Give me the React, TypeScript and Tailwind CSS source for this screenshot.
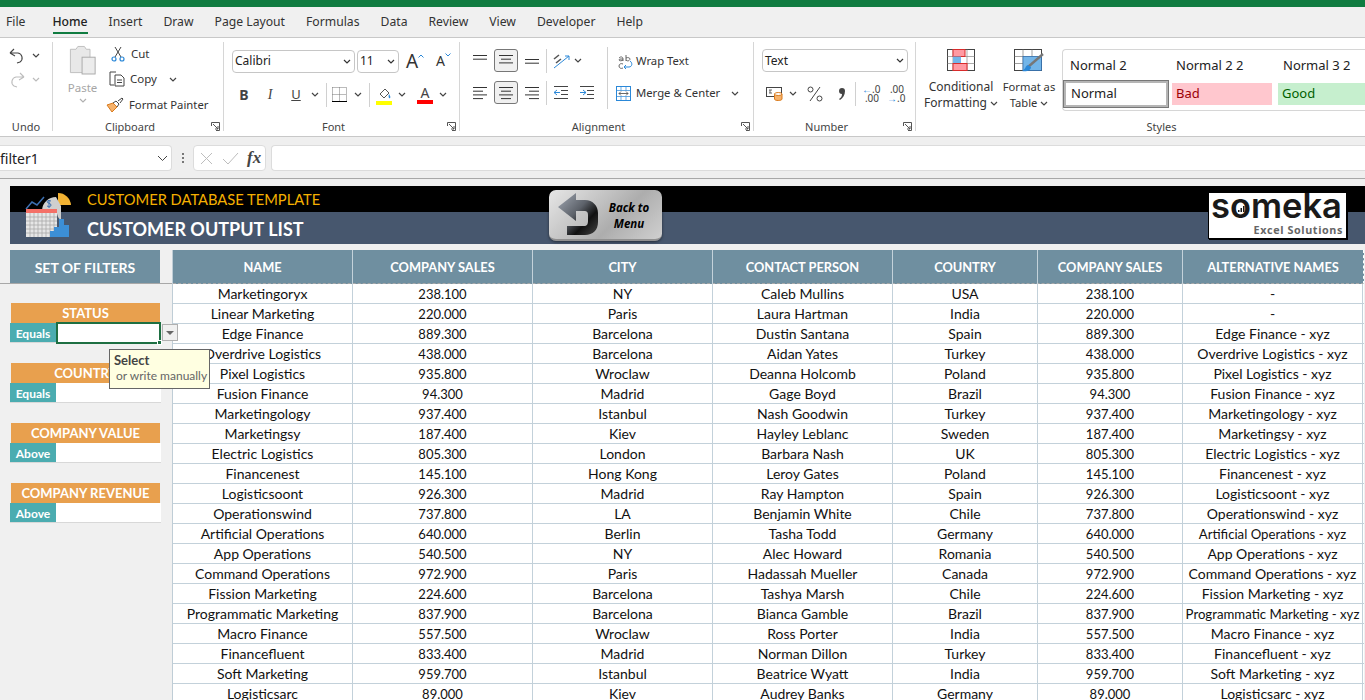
import React from 'react';

const tabs = ['File', 'Home', 'Insert', 'Draw', 'Page Layout', 'Formulas', 'Data', 'Review', 'View', 'Developer', 'Help'];

const rows = [
  ['Marketingoryx', '238.100', 'NY', 'Caleb Mullins', 'USA', '-'],
  ['Linear Marketing', '220.000', 'Paris', 'Laura Hartman', 'India', '-'],
  ['Edge Finance', '889.300', 'Barcelona', 'Dustin Santana', 'Spain'],
  ['Overdrive Logistics', '438.000', 'Barcelona', 'Aidan Yates', 'Turkey'],
  ['Pixel Logistics', '935.800', 'Wroclaw', 'Deanna Holcomb', 'Poland'],
  ['Fusion Finance', '94.300', 'Madrid', 'Gage Boyd', 'Brazil'],
  ['Marketingology', '937.400', 'Istanbul', 'Nash Goodwin', 'Turkey'],
  ['Marketingsy', '187.400', 'Kiev', 'Hayley Leblanc', 'Sweden'],
  ['Electric Logistics', '805.300', 'London', 'Barbara Nash', 'UK'],
  ['Financenest', '145.100', 'Hong Kong', 'Leroy Gates', 'Poland'],
  ['Logisticsoont', '926.300', 'Madrid', 'Ray Hampton', 'Spain'],
  ['Operationswind', '737.800', 'LA', 'Benjamin White', 'Chile'],
  ['Artificial Operations', '640.000', 'Berlin', 'Tasha Todd', 'Germany'],
  ['App Operations', '540.500', 'NY', 'Alec Howard', 'Romania'],
  ['Command Operations', '972.900', 'Paris', 'Hadassah Mueller', 'Canada'],
  ['Fission Marketing', '224.600', 'Barcelona', 'Tashya Marsh', 'Chile'],
  ['Programmatic Marketing', '837.900', 'Barcelona', 'Bianca Gamble', 'Brazil'],
  ['Macro Finance', '557.500', 'Wroclaw', 'Ross Porter', 'India'],
  ['Financefluent', '833.400', 'Madrid', 'Norman Dillon', 'Turkey'],
  ['Soft Marketing', '959.700', 'Istanbul', 'Beatrice Wyatt', 'India'],
  ['Logisticsarc', '89.000', 'Kiev', 'Audrey Banks', 'Germany'],
];

const headers = ['NAME', 'COMPANY SALES', 'CITY', 'CONTACT PERSON', 'COUNTRY', 'COMPANY SALES', 'ALTERNATIVE NAMES'];
const cols = 'grid grid-cols-[180px_180px_180px_180px_145px_145px_180px]';

function Chev({ className = '', color = '#444' }: { className?: string; color?: string }) {
  return (
    <svg width="8" height="5" viewBox="0 0 8 5" className={className}>
      <path d="M1 1l3 3 3-3" fill="none" stroke={color} strokeWidth="1.2" />
    </svg>
  );
}

function Launcher() {
  return (
    <svg width="9" height="9" viewBox="0 0 9 9" className="absolute right-[3px] bottom-0">
      <path d="M.5 4V.5H8.500V8.500H5M2 2l5 5M7 4v3H4" fill="none" stroke="#555" strokeWidth="1" />
    </svg>
  );
}

function Lines({ w = [14, 10, 14, 10], align = 'left' }: { w?: number[]; align?: string }) {
  return (
    <svg width="16" height="14" viewBox="0 0 16 14">
      {w.map((l, i) => {
        const x = align === 'left' ? 1 : align === 'right' ? 15 - l : 8 - l / 2;
        return <path key={i} d={`M${x} ${1.5 + i * 3.7}h${l}`} stroke="#333" strokeWidth="1" />;
      })}
    </svg>
  );
}

function Sep({ h = 'h-[24px]' }: { h?: string }) {
  return <div className={`w-px ${h} bg-[#d0d0d0]`} />;
}

function Group({ w, label, launcher, labelClass = '', children }: { w: number; label: string; launcher?: boolean; labelClass?: string; children: React.ReactNode }) {
  return (
    <div style={{ width: w }} className="relative flex flex-col shrink-0 border-r border-[#d6d6d6] mb-[5px] mt-[4px] last:border-r-0">
      <div className="flex-1 min-h-0">{children}</div>
      <div className={`h-[16px] text-center text-[11px] leading-[23px] text-[#444] ${launcher ? 'pr-[16px]' : ''} ${labelClass}`}>{label}</div>
      {launcher && <Launcher />}
    </div>
  );
}

function Combo({ text, w }: { text: string; w: number }) {
  return (
    <div style={{ width: w }} className="h-[23px] bg-white border border-[#c6c6c6] rounded-[4px] flex items-center justify-between pl-[2px] pr-[3px] text-[12px] text-[#222]">
      <span>{text}</span>
      <Chev color="#333" />
    </div>
  );
}

function RibbonIconBtn({ w, active, children }: { w: number; active?: boolean; children: React.ReactNode }) {
  return (
    <div style={{ width: w }} className={`h-[23px] flex items-center justify-center rounded-[3px] ${active ? 'bg-[#f0f0f0] border border-[#777]' : ''}`}>
      {children}
    </div>
  );
}

function Ribbon() {
  return (
    <div className="h-[99px] bg-white border-b border-[#c8c8c8] flex overflow-hidden">
      <Group w={53} label="Undo">
        <div className="pt-[1px] pl-[9px] flex items-center gap-[7px] h-[25px]">
          <svg width="16" height="17" viewBox="0 0 16 17">
            <path d="M1 6l4-4M1 6l5 3M1 6h8a5 5 0 0 1 2 9l-3 1" fill="none" stroke="#444" strokeWidth="1.1" />
          </svg>
          <Chev />
        </div>
        <div className="pl-[9px] flex items-center gap-[7px] h-[25px]">
          <svg width="16" height="17" viewBox="0 0 16 17">
            <path d="M15 6l-4-4M15 6l-5 3M15 6H7a5 5 0 0 0-2 9l3 1" fill="none" stroke="#bdbdbd" strokeWidth="1.1" />
          </svg>
          <Chev color="#bbb" />
        </div>
      </Group>

      <Group w={171} label="Clipboard" launcher>
        <div className="flex">
          <div className="w-[56px] flex flex-col items-center pl-[3px] pt-[3px]">
            <svg width="28" height="30" viewBox="0 0 30 32">
              <path d="M1.500 4.500h6l2-3h7l2 3h4v25h-21z" fill="#e8e8e8" stroke="#bcbcbc" />
              <rect x="14" y="13" width="14" height="18" fill="#ececec" stroke="#a8a8a8" />
            </svg>
            <span className="text-[11.5px] leading-[16px] mt-[5px] text-[#a6a6a6]">Paste</span>
            <Chev color="#b0b0b0" className="mt-[2px]" />
          </div>
          <div className="flex flex-col text-[11.5px] text-[#333] -mt-[1px]">
            <div className="h-[25px] flex items-center gap-[6px]">
              <svg width="14" height="16" viewBox="0 0 14 16" className="ml-[2px]">
                <path d="M4 1l6 10M10 1L4 11" fill="none" stroke="#444" strokeWidth="1" />
                <circle cx="3" cy="13" r="2" fill="none" stroke="#2b88d8" strokeWidth="1.200" />
                <circle cx="11" cy="13" r="2" fill="none" stroke="#2b88d8" strokeWidth="1.200" />
              </svg>
              <span>Cut</span>
            </div>
            <div className="h-[26px] flex items-center gap-[5px]">
              <svg width="16" height="16" viewBox="0 0 16 16">
                <path d="M5 14H1V1h6M6 4h6l3 3v8H6zM8 9h5M8 11.500h5" fill="none" stroke="#444" strokeWidth="1" />
              </svg>
              <span>Copy</span>
              <Chev className="ml-[7px]" />
            </div>
            <div className="h-[26px] flex items-center gap-[5px] -ml-[3px]">
              <svg width="18" height="16" viewBox="0 0 18 16">
                <path d="M1 8l5 7 5-5-4-4z" fill="#f6b26b" stroke="#d97a1c" />
                <path d="M7 6l3-2 3 3-2 3M12 4l4-3 1 1-3 4" fill="none" stroke="#444" />
              </svg>
              <span className="text-[11.3px]">Format Painter</span>
            </div>
          </div>
        </div>
      </Group>

      <Group w={236} label="Font" launcher>
        <div className="pl-[8px] pt-[7px]">
          <div className="flex items-center gap-[2px]">
            <Combo text="Calibri" w={123} />
            <Combo text="11" w={42} />
            <div className="flex items-start ml-[5px] text-[#333] w-[28px]">
              <span className="text-[19px] leading-[22px]">A</span>
              <svg width="6" height="4" viewBox="0 0 6 4" className="mt-[4px]"><path d="M.5 3.500L3 1l2.500 2.500" fill="none" stroke="#2b88d8" /></svg>
            </div>
            <div className="flex items-start text-[#333]">
              <span className="text-[14px] leading-[24px]">A</span>
              <svg width="6" height="4" viewBox="0 0 6 4" className="mt-[4px]"><path d="M.5.5L3 3 5.500.5" fill="none" stroke="#2b88d8" /></svg>
            </div>
          </div>
          <div className="flex items-center mt-[10px] h-[23px] text-[#444]">
            <span className="w-[26px] -ml-[1px] text-center font-bold text-[14px]">B</span>
            <span className="w-[26px] text-center italic text-[14px] font-['Liberation_Serif',serif]">I</span>
            <span className="w-[26px] text-center underline text-[13px]">U</span>
            <Chev className="ml-[2px]" />
            <div className="ml-[7px]"><Sep /></div>
            <svg width="15" height="15" viewBox="0 0 15 15" className="ml-[5px]">
              <path d="M.5.500h14M.5 7.500h14M.5.500v14M7.500.500v14M14.500.500v14" stroke="#777" strokeDasharray="1 1" fill="none" />
              <path d="M0 14.500h15" stroke="#000" />
            </svg>
            <Chev className="ml-[7px]" />
            <div className="ml-[7px]"><Sep /></div>
            <svg width="16" height="20" viewBox="0 0 16 20" className="ml-[6px]">
              <path d="M4 9l5-5 4 4-5 5z" fill="#fff" stroke="#555" />
              <path d="M13 9c1 2 2 3 1 4s-2-1-1-4" fill="#2b88d8" />
              <rect y="16" width="16" height="4" fill="#ffff00" />
            </svg>
            <Chev className="ml-[6px]" />
            <div className="ml-[11px] w-[16px] flex flex-col items-center">
              <span className="text-[14px] leading-[14px]">A</span>
              <div className="w-[16px] h-[4px] bg-[#ff0000]" />
            </div>
            <Chev className="ml-[6px]" />
          </div>
        </div>
      </Group>

      <Group w={294} label="Alignment" launcher>
        <div className="pl-[12px] pt-[7px] flex">
          <div className="flex flex-col">
            <div className="flex items-center h-[23px]">
              <RibbonIconBtn w={16}><Lines w={[14, 14]} /></RibbonIconBtn>
              <div className="mx-[6px]"><RibbonIconBtn w={24} active><Lines w={[14, 10, 14]} align="center" /></RibbonIconBtn></div>
              <RibbonIconBtn w={16}><div className="mt-[8px]"><Lines w={[14, 14]} /></div></RibbonIconBtn>
              <div className="ml-[6px]"><Sep /></div>
              <svg width="18" height="16" viewBox="0 0 18 16" className="ml-[6px]">
                <path d="M1 15L16 3M16 3h-4M16 3v4" fill="none" stroke="#2b88d8" />
                <path d="M1 6l5-4M3 10l5-4" fill="none" stroke="#555" strokeWidth="1.600" />
              </svg>
              <Chev className="ml-[3px]" />
            </div>
            <div className="flex items-center h-[23px] mt-[9px]">
              <RibbonIconBtn w={16}><Lines /></RibbonIconBtn>
              <div className="mx-[6px]"><RibbonIconBtn w={24} active><Lines w={[14, 10, 14, 10]} align="center" /></RibbonIconBtn></div>
              <RibbonIconBtn w={16}><Lines align="right" /></RibbonIconBtn>
              <div className="ml-[6px]"><Sep /></div>
              <svg width="16" height="13" viewBox="0 0 16 13" className="ml-[6px]">
                <path d="M1 .5h14M8 4.500h7M8 8.500h7M1 12.500h14" stroke="#444" />
                <path d="M7 6.500H1M1 6.500l3-2.500M1 6.500l3 2.500" fill="none" stroke="#2b88d8" />
              </svg>
              <svg width="16" height="13" viewBox="0 0 16 13" className="ml-[10px]">
                <path d="M1 .5h14M8 4.500h7M8 8.500h7M1 12.500h14" stroke="#444" />
                <path d="M1 6.500h6M7 6.500L4 4M7 6.500L4 9" fill="none" stroke="#2b88d8" />
              </svg>
            </div>
          </div>
          <div className="ml-[12px] -mt-[2px]"><Sep h="h-[62px]" /></div>
          <div className="ml-[10px] pt-[1px] flex flex-col text-[11.3px] text-[#333]">
            <div className="h-[23px] flex items-center gap-[3px]">
              <svg width="15" height="16" viewBox="0 0 15 16" className="overflow-visible">
                <path d="M1 4c2-2 4-1 4 1v2M5 5c-3 0-4 0-4 1s3 1 4 0M8 1v6M8 4c2-1 4 0 4 1s-2 3-4 1M5 10c-2-1-4 0-4 2s2 3 4 2" fill="none" stroke="#555" strokeWidth=".9" />
                <path d="M12 7c3 2 2 6-1 6H6M6 13l2-2M6 13l2 2" fill="none" stroke="#2b88d8" />
              </svg>
              <span>Wrap Text</span>
            </div>
            <div className="h-[23px] mt-[9px] flex items-center -ml-[2px] gap-[5px]">
              <svg width="15" height="15" viewBox="0 0 15 15">
                <rect x=".5" y=".5" width="14" height="14" fill="#fff" stroke="#2b88d8" />
                <path d="M.5 4.500h14M.5 10.500h14M5 .5v4M10 .5v4M5 10.500v4M10 10.500v4" stroke="#2b88d8" strokeWidth=".7" />
                <path d="M3 7.500h9M3 7.500l2-2M3 7.500l2 2M12 7.500l-2-2M12 7.500l-2 2" fill="none" stroke="#444" strokeWidth=".8" />
              </svg>
              <span>Merge &amp; Center</span>
              <Chev className="ml-[6px]" />
            </div>
          </div>
        </div>
      </Group>

      <Group w={162} label="Number" launcher>
        <div className="pl-[8px] pt-[7px]">
          <Combo text="Text" w={146} />
          <div className="flex items-center h-[23px] mt-[10px] text-[#444]">
            <svg width="17" height="15" viewBox="0 0 17 15" className="ml-[4px]">
              <rect x=".5" y="1.500" width="15" height="9" fill="#fff" stroke="#444" />
              <path d="M3 4h3M3 7h3M4 4v3" fill="none" stroke="#666" />
              <path d="M8.500 8v5c0 2 7.500 2 7.500 0V8z" fill="#f6b26b" stroke="#d97a1c" />
              <ellipse cx="12.250" cy="8" rx="3.750" ry="1.500" fill="#fff" stroke="#d97a1c" />
            </svg>
            <Chev className="ml-[6px]" />
            <svg width="16" height="16" viewBox="0 0 16 16" className="ml-[10px]">
              <circle cx="3.500" cy="3.500" r="2.500" fill="none" stroke="#444" />
              <circle cx="12.500" cy="12.500" r="2.500" fill="none" stroke="#444" />
              <path d="M13 1L3 15" stroke="#444" />
            </svg>
            <svg width="8" height="12" viewBox="0 0 8 12" className="ml-[15px]">
              <path d="M4 0a3 3 0 0 1 3 3c0 4-2 7-5 9l-1-1c2-1 3-3 3-5a3 3 0 0 1 0-6z" fill="#444" />
            </svg>
            <div className="ml-[9px]"><Sep /></div>
            <div className="ml-[6px] w-[17px] text-[10px] leading-[11px] text-right whitespace-nowrap">
              <div><span className="text-[#2b88d8]">←</span>.0</div>
              <div className="-mt-[2px]">.00</div>
            </div>
            <div className="w-[17px] ml-[8px] text-[10px] leading-[11px] text-right whitespace-nowrap">
              <div>.00</div>
              <div className="-mt-[2px]"><span className="text-[#2b88d8]">→</span>.0</div>
            </div>
          </div>
        </div>
      </Group>

      <Group w={449} label="Styles" labelClass="pl-[42px]">
        <div className="flex pt-[7px]">
          <div className="w-[85px] pl-[5px] flex flex-col items-center text-[12px] leading-[16px] text-[#333]">
            <svg width="28" height="22" viewBox="0 0 28 22">
              <rect x=".5" y=".5" width="27" height="21" fill="#fff" stroke="#444" />
              <path d="M.5 7.500h27M.5 14.500h27M6 .5v21M13 .5v21M20 .5v21" stroke="#888" strokeWidth=".7" />
              <rect x="6" y=".5" width="12" height="7" fill="#ff9aa2" stroke="#d92b2b" />
              <rect x="6" y="7.500" width="8" height="7" fill="#73b5e8" />
              <rect x="6" y="14.500" width="14" height="7" fill="#ff9aa2" stroke="#d92b2b" />
            </svg>
            <span className="mt-[8px] whitespace-nowrap">Conditional</span>
            <span className="whitespace-nowrap flex items-center gap-[3px]">Formatting <Chev /></span>
          </div>
          <div className="w-[56px] flex flex-col items-center text-[11.2px] leading-[16px] text-[#333]">
            <svg width="30" height="23" viewBox="0 0 30 23">
              <rect x=".5" y=".5" width="27" height="21" fill="#fff" stroke="#444" />
              <path d="M.5 7.500h27M.5 14.500h27M9 .5v21M18 .5v21" stroke="#777" strokeWidth=".7" />
              <rect x="9" y="7.500" width="18.500" height="14" fill="#73b5e8" stroke="#2b6cb0" strokeWidth=".7" />
              <path d="M29 5L14 18" stroke="#777" strokeWidth="2.400" />
              <path d="M14 16c-3 1-2 4-6 6 5 1 9-1 9-4z" fill="#2b88d8" />
            </svg>
            <span className="mt-[7px] whitespace-nowrap">Format as</span>
            <span className="whitespace-nowrap flex items-center gap-[3px]">Table <Chev /></span>
          </div>
          <div className="ml-[5px] w-[303px] h-[62px] border border-r-0 border-[#d6d6d6] rounded-l-[4px] text-[13px] text-[#222] overflow-hidden">
            <div className="flex h-[30px] items-center pt-[2px]">
              <span className="w-[106px] pl-[7px]">Normal 2</span>
              <span className="w-[107px] pl-[7px]">Normal 2 2</span>
              <span className="pl-[7px]">Normal 3 2</span>
            </div>
            <div className="flex items-center">
              <div className="w-[106px] h-[28px] bg-white border-[3px] border-[#b5b5b5] outline outline-[#777] -outline-offset-1 flex items-center pl-[5px]">Normal</div>
              <div className="ml-[3px] w-[100px] h-[22px] bg-[#ffc7ce] text-[#9c0006] flex items-center pl-[4px]">Bad</div>
              <div className="ml-[6px] flex-1 h-[22px] bg-[#c6efce] text-[#006100] flex items-center pl-[4px]">Good</div>
            </div>
          </div>
        </div>
      </Group>
    </div>
  );
}

function FormulaBar() {
  return (
    <div className="h-[42px] bg-[#efefef] border-b border-[#a8a8a8] pt-[8px] flex items-start">
      <div className="w-[172px] h-[26px] bg-white border border-l-0 border-[#dcdcdc] rounded-r-[4px] flex items-center justify-between pr-[3px] text-[14px] text-[#222]">
        <span className="pt-[1px]">filter1</span>
        <svg width="11" height="7" viewBox="0 0 11 7"><path d="M1 1l4.500 4.500L10 1" fill="none" stroke="#444" /></svg>
      </div>
      <div className="w-[21px] h-[26px] flex flex-col items-center justify-center gap-[2px]">
        <div className="w-[2px] h-[2px] bg-[#777]" />
        <div className="w-[2px] h-[2px] bg-[#777]" />
        <div className="w-[2px] h-[2px] bg-[#777]" />
      </div>
      <div className="w-[73px] h-[26px] bg-white border border-[#dcdcdc] rounded-[4px] flex items-center pl-[6px]">
        <svg width="13" height="13" viewBox="0 0 13 13"><path d="M1 1l11 11M12 1L1 12" stroke="#bdbdbd" /></svg>
        <svg width="17" height="13" viewBox="0 0 17 13" className="ml-[9px]"><path d="M1 7l5 5L16 1" fill="none" stroke="#bdbdbd" /></svg>
        <span className="ml-[8px] italic font-bold text-[17px] text-[#444] font-['Liberation_Serif',serif]">fx</span>
      </div>
      <div className="ml-[5px] flex-1 h-[26px] bg-white border border-r-0 border-[#dcdcdc] rounded-l-[4px]" />
    </div>
  );
}

function BackButton() {
  return (
    <div className="w-[113px] h-[51px] rounded-[7px] bg-[linear-gradient(135deg,#e6e6e6,#bcbcbc_45%,#adadad_60%,#d0d0d0)] border-b-2 border-[#8f8f8f] shadow-[0_1px_3px_rgba(0,0,0,.5)] flex items-center">
      <svg width="42" height="44" viewBox="0 0 42 44" className="ml-[8px] shrink-0">
        <defs>
          <linearGradient id="bk" x1="0" y1="0" x2="1" y2="1">
            <stop offset="0" stopColor="#a3aab5" />
            <stop offset=".45" stopColor="#5d626a" />
            <stop offset=".7" stopColor="#111" />
            <stop offset="1" stopColor="#444" />
          </linearGradient>
        </defs>
        <path d="M1 15L19 1v7h9c8 0 13 6 13 13v9c0 8-5 13-13 13H10v-9h17c3 0 4-2 4-5v-6c0-3-1-4-4-4h-8v10z" fill="url(#bk)" />
      </svg>
      <div className="flex-1 pr-[3px] pt-[3px] text-center italic font-bold text-[11.5px] leading-[16px] text-black font-['Open_Sans',sans-serif] whitespace-nowrap">
        Back to<br />Menu
      </div>
    </div>
  );
}

function SomekaLogo() {
  return (
    <div className="w-[139px] h-[47px] bg-white border border-black shadow-[1px_1px_0_#000] flex flex-col font-['Inter',sans-serif]">
      <div className="text-[34.500px] leading-[26px] pl-[2px] font-semibold text-[#1a1a1a] whitespace-nowrap">
        s<span className="relative">o<svg width="8" height="8" viewBox="0 0 8 8" className="absolute left-[7px] top-[20px]"><path d="M1 7V5h1.500v2zM3.500 7V3H5v4zM6 7V1h1.500v6z" fill="#1a1a1a" /></svg></span>meka
      </div>
      <div className="text-right pr-[3px] mt-[4px] text-[10.800px] leading-[14px] font-bold text-[#666] tracking-[.6px] font-['Open_Sans',sans-serif] whitespace-nowrap">Excel Solutions</div>
    </div>
  );
}

function Banner() {
  return (
    <div className="ml-[10px] h-[58px] flex items-center bg-[linear-gradient(#000_0_26px,#47576e_26px)] font-['Lato',sans-serif]">
      <svg width="48" height="48" viewBox="0 0 48 48" className="ml-[15px] shrink-0">
        <path d="M1 18l6-7 5 3 7-8" fill="none" stroke="#3c6fb0" strokeWidth="1.500" />
        <path d="M33 2a13 13 0 0 1 13 12H33z" fill="#f2b233" />
        <path d="M31 6a14 14 0 0 0-14 13h14l2 7 3 4V15z" fill="#cfcfcf" />
        <path d="M24 9v8M26 10c-3-1-4 0-4 1s4 1 4 3-2 2-4 1" fill="none" stroke="#3c6fb0" />
        <rect x="1" y="18" width="31" height="4" fill="#f47067" />
        <rect x="1" y="22" width="31" height="24" fill="#e6e6e6" />
        <path d="M1 26h31M1 30h31M1 34h31M1 38h31M1 42h31M5 22v24M9 22v24M13 22v24M17 22v24M21 22v24M25 22v24M29 22v24" stroke="#aaa" strokeWidth=".8" />
        <path d="M25 46v-6h4v-4h5v-8h5v6h5v12z" fill="#3c8fd6" />
      </svg>
      <div className="ml-[14px] w-[462px] shrink-0">
        <div className="h-[26px] leading-[27px] text-[14.700px] text-[#f5b000]">CUSTOMER DATABASE TEMPLATE</div>
        <div className="h-[32px] leading-[34px] text-[18px] font-bold text-white">CUSTOMER OUTPUT LIST</div>
      </div>
      <BackButton />
      <div className="ml-auto mr-[18px]"><SomekaLogo /></div>
    </div>
  );
}

function Filter({ title, op, selected }: { title: string; op: string; selected?: boolean }) {
  return (
    <div className="ml-[10px] w-[151px] mb-[20px]">
      <div className="ml-px w-[149px] h-[20px] bg-[#e8a04e] text-white font-bold text-[13px] leading-[20px] text-center whitespace-nowrap">{title}</div>
      <div className="h-[20px] flex border-b border-[#d8d8d8] relative">
        <div className="w-[46px] bg-[#4bacb0] text-white font-bold text-[12px] leading-[21px] text-center">{op}</div>
        <div className="flex-1 bg-white" />
        {selected && (
          <>
            <div className="absolute left-[46px] -top-[1px] w-[105px] h-[22px] border-2 border-[#1e6f42]">
              <div className="absolute -right-[3px] -bottom-[3px] w-[5px] h-[5px] bg-[#1e6f42] border border-white" />
            </div>
            <div className="absolute left-[152px] top-[1px] w-[16px] h-[17px] bg-[#f0f0f0] border border-[#b0b0b0] flex items-center justify-center">
              <div className="w-0 h-0 border-x-[4px] border-x-transparent border-t-[4px] border-t-[#666]" />
            </div>
          </>
        )}
      </div>
    </div>
  );
}

function Sheet() {
  return (
    <div className="flex-1 bg-[#f0f0f0] pt-[7px] overflow-hidden font-['Lato',sans-serif]">
      <Banner />
      <div className="flex mt-[6px]">
        <div className="w-[172px] shrink-0 relative">
          <div className="h-[34px] border-b border-[#a8a8a8] mb-[19px]">
            <div className="ml-[10px] w-[150px] h-[33px] bg-[#6f8fa0] text-white font-bold text-[14px] leading-[35px] text-center">SET OF FILTERS</div>
          </div>
          <Filter title="STATUS" op="Equals" selected />
          <Filter title="COUNTRY" op="Equals" />
          <Filter title="COMPANY VALUE" op="Above" />
          <Filter title="COMPANY REVENUE" op="Above" />
          <div className="absolute left-[109px] top-[99px] z-10 w-[101px] h-[40px] bg-[#ffffe1] border border-[#666] pl-[4px] pt-[3px] text-[#666] text-[12px] leading-[14px] whitespace-nowrap">
            <div className="font-bold text-[13px] leading-[15px] text-[#444]">Select</div>
            <div className="pl-[2px] pt-[1px]">or write manually</div>
          </div>
        </div>
        <div className="border-l border-[#bfcdd6]">
          <div className={`${cols} h-[34px] bg-[#6f8fa0] border-b border-[#a8a8a8] border-r border-dashed border-r-[#fff]`}>
            {headers.map((h, i) => (
              <div key={i} className="border-r border-[#c4d2da] last:border-r-0 text-white font-bold text-[12.800px] leading-[35px] text-center whitespace-nowrap">{h}</div>
            ))}
          </div>
          {rows.map(r => {
            const alt = r[5] ?? `${r[0]} - xyz`;
            const cells = [r[0], r[1], r[2], r[3], r[4], r[1], alt];
            return (
              <div key={r[0]} className={`${cols} h-[20px] bg-white border-b border-[#c3d1da]`}>
                {cells.map((c, i) => (
                  <div
                    key={i}
                    className={`border-r border-[#c3d1da] leading-[20px] text-[#111] text-center whitespace-nowrap ${
                      i === 1 || i === 5 ? 'text-[13px]' : c.length > 26 ? 'text-[13.200px]' : 'text-[14px]'
                    }`}
                  >
                    {c}
                  </div>
                ))}
              </div>
            );
          })}
        </div>
      </div>
    </div>
  );
}

export default function App() {
  return (
    <div className="w-[1365px] h-[700px] overflow-hidden flex flex-col bg-[#f0f0f0] font-['Noto_Sans',sans-serif]">
      <div className="h-[7px] bg-[#107c41]" />
      <div className="h-[31px] bg-[#f0f0f0] border-b border-[#c8c8c8] flex items-center gap-[21px] pl-[6px] pt-[1px] text-[12.200px] text-[#333]">
        {tabs.map(t => (
          <div key={t} className={`h-full flex items-center relative ${t === 'Home' ? 'ml-[6px] font-medium text-[#222]' : ''}`}>
            {t}
            {t === 'Home' && <div className="absolute left-0 right-0 bottom-[3px] h-[2px] bg-[#107c41]" />}
          </div>
        ))}
      </div>
      <Ribbon />
      <FormulaBar />
      <Sheet />
    </div>
  );
}
